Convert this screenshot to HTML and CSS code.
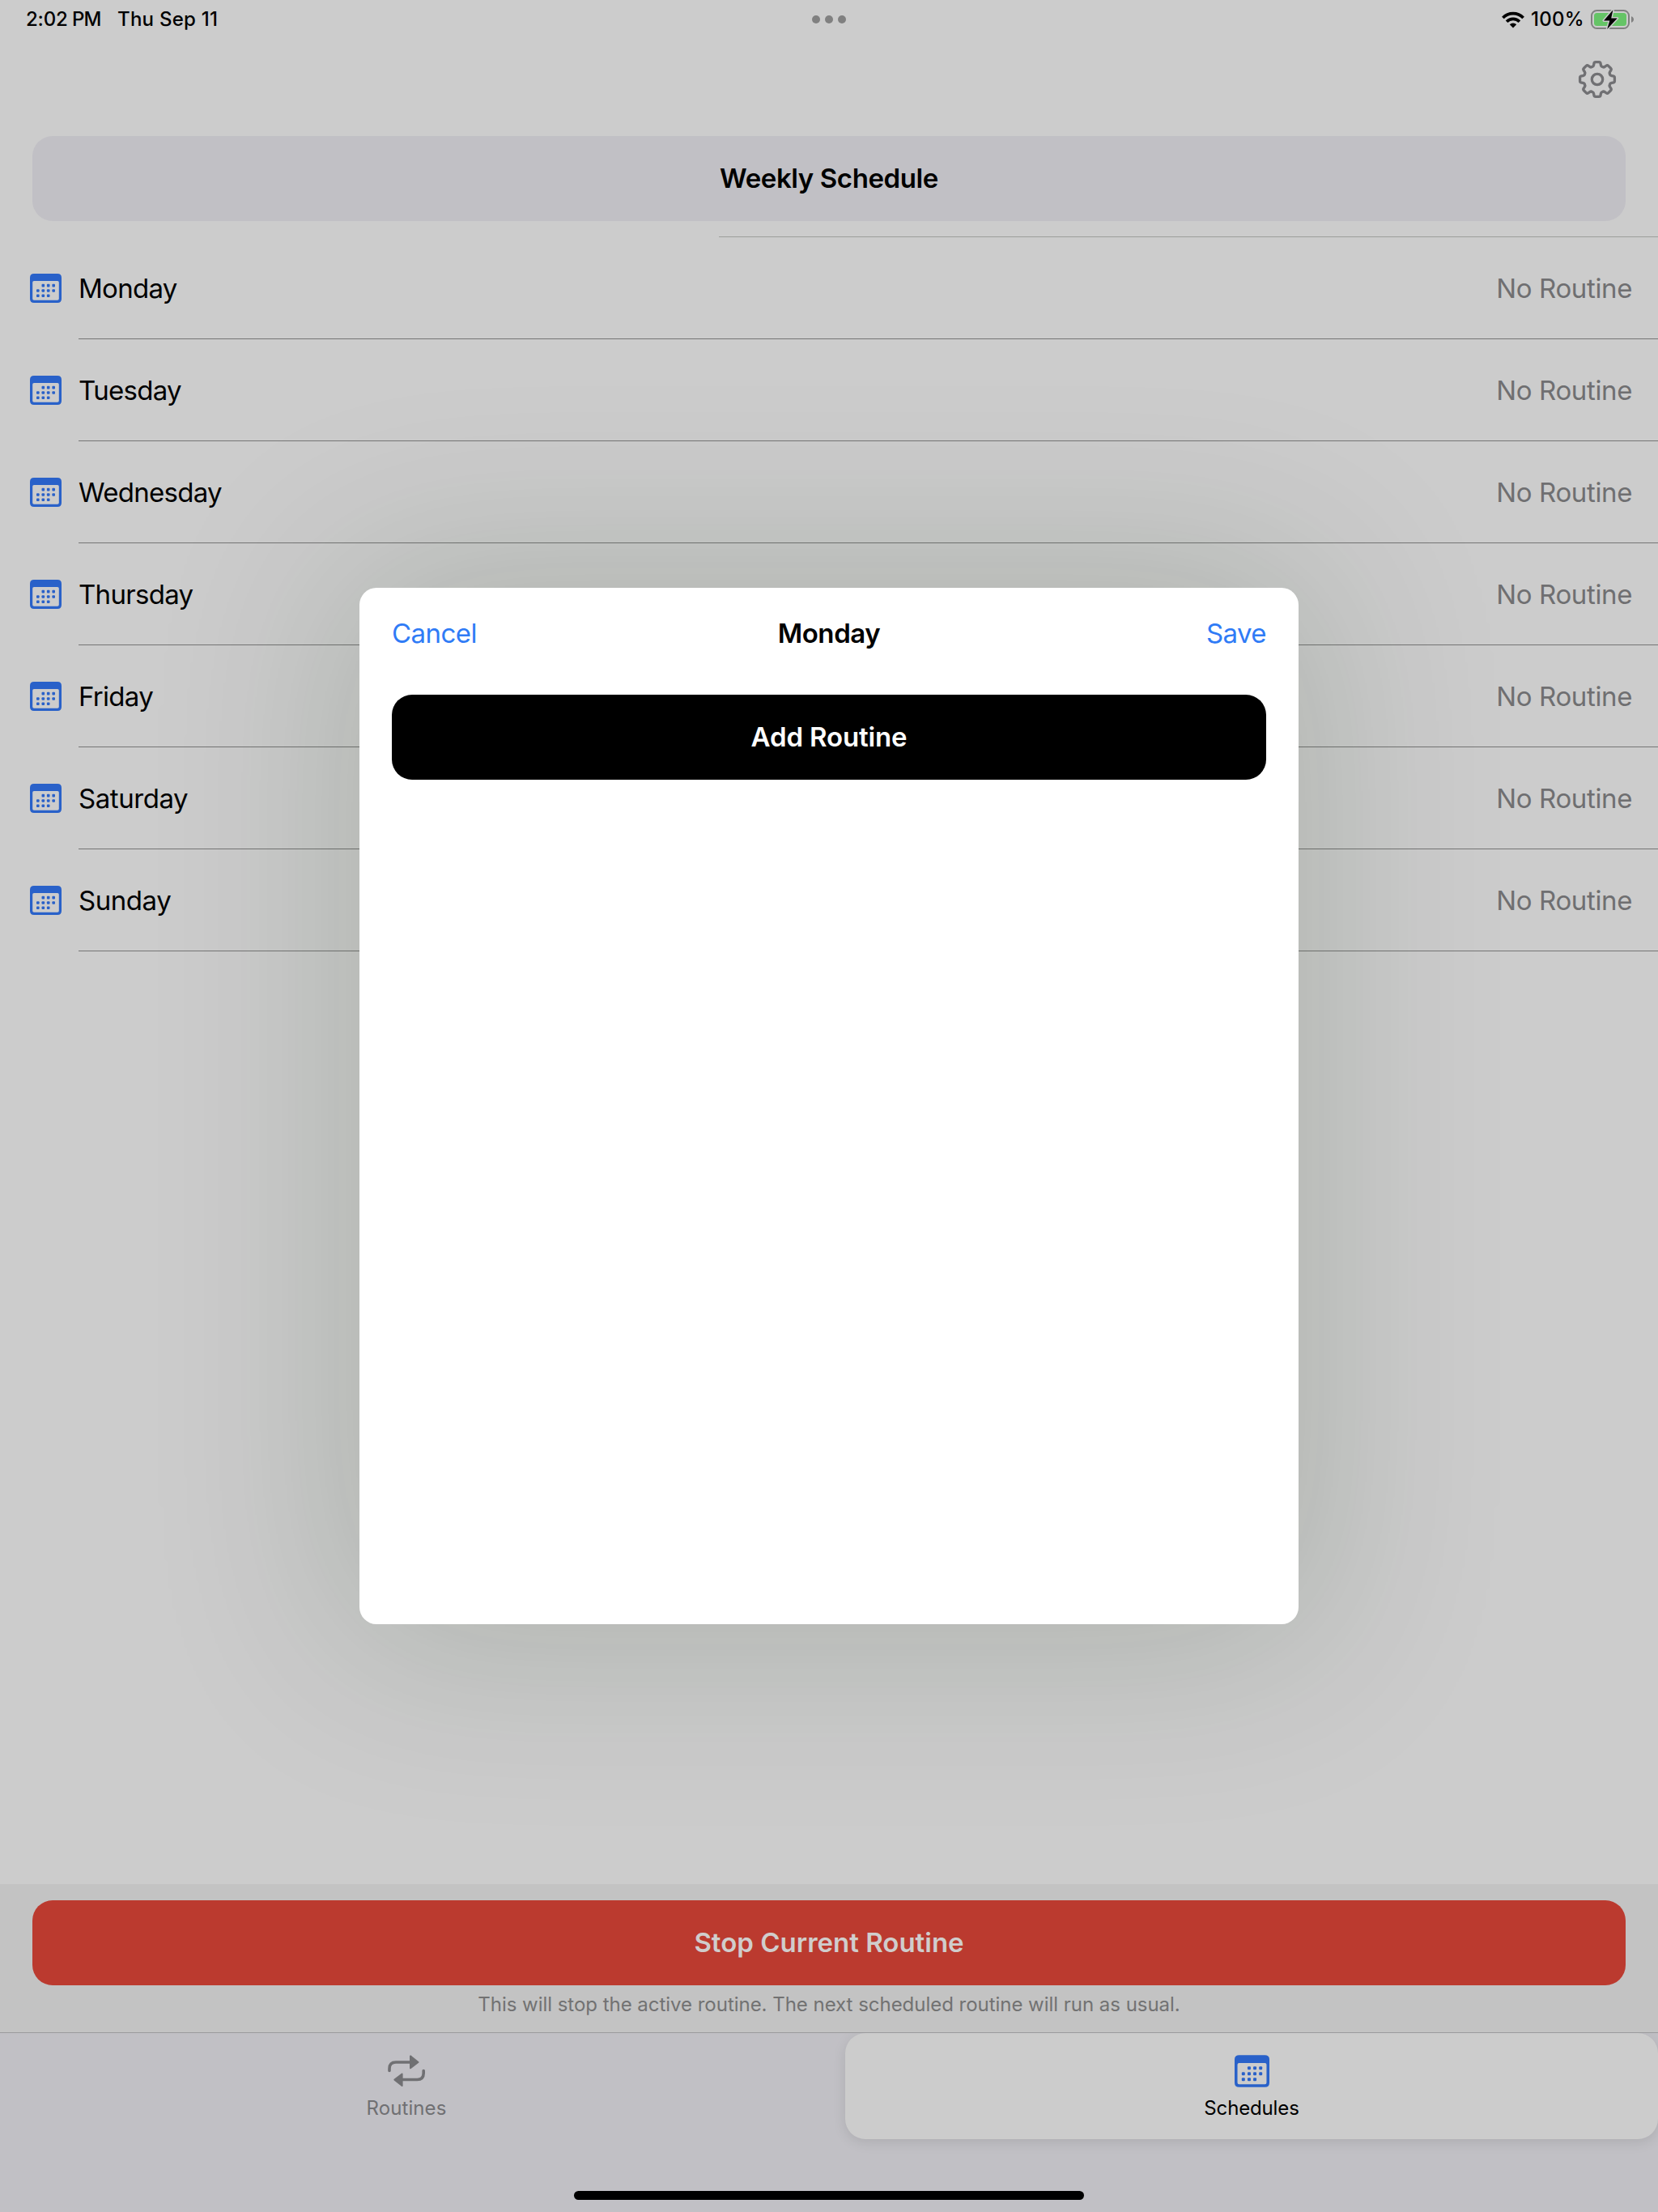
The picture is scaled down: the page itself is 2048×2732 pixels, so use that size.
FILE: index.html
```
<!DOCTYPE html>
<html lang="en">
<head>
<meta charset="utf-8">
<title>Weekly Schedule</title>
<link rel="stylesheet" href="styles.css">
</head>
<body>
<svg class="defs" aria-hidden="true">
  <symbol id="calendar" viewBox="0 0 39 36">
    <path fill="currentColor" fill-rule="evenodd" d="M5 0H34Q39 0 39 5V31Q39 36 34 36H5Q0 36 0 31V5Q0 0 5 0ZM5 9Q3.2 9 3.2 10.8V31Q3.2 32.8 5 32.8H34Q35.8 32.8 35.8 31V10.8Q35.8 9 34 9Z"/>
    <g fill="currentColor">
      <rect x="14.5" y="12.8" width="3.6" height="3.6" rx="1"/><rect x="20.9" y="12.8" width="3.6" height="3.6" rx="1"/><rect x="27.4" y="12.8" width="3.6" height="3.6" rx="1"/>
      <rect x="8" y="19.2" width="3.6" height="3.6" rx="1"/><rect x="14.5" y="19.2" width="3.6" height="3.6" rx="1"/><rect x="20.9" y="19.2" width="3.6" height="3.6" rx="1"/><rect x="27.4" y="19.2" width="3.6" height="3.6" rx="1"/>
      <rect x="8" y="25.5" width="3.6" height="3.6" rx="1"/><rect x="14.5" y="25.5" width="3.6" height="3.6" rx="1"/><rect x="20.9" y="25.5" width="3.6" height="3.6" rx="1"/>
    </g>
  </symbol>
</svg>

<div class="app">
  <header class="status">
    <div class="status-left"><span class="time">2:02</span><span class="ampm">PM</span><span class="date">Thu Sep 11</span></div>
    <div class="dots"><i></i><i></i><i></i></div>
    <div class="status-right">
      <svg class="wifi" width="28" height="21" viewBox="0 0 28 21">
        <g fill="none" stroke="#000" stroke-width="3.7"><path d="M1.4 8A17.6 17.6 0 0 1 26.6 8"/><path d="M6.1 12.7A11 11 0 0 1 21.9 12.7"/></g>
        <path d="M14 20.4L9.8 16.2A5.9 5.9 0 0 1 18.2 16.2Z"/>
      </svg>
      <span class="percent">100%</span>
      <svg class="battery" width="54" height="26" viewBox="0 0 54 26">
        <rect x="1" y="2" width="46" height="22" rx="6.5" fill="none" stroke="#808080" stroke-width="2"/>
        <rect x="4" y="5" width="40" height="16" rx="3.5" fill="#65c466"/>
        <path d="M50 9.2Q53 10.2 53 13T50 16.8Z" fill="#808080"/>
        <path d="M27.4 1.2L16 14.4H23.3L20.2 25L32.8 11.5H25.2Z" fill="#000" stroke="#ccc" stroke-width="3" paint-order="stroke" stroke-linejoin="round"/>
      </svg>
    </div>
  </header>

  <div class="toolbar">
    <svg width="48" height="48" viewBox="-24 -24 48 48" fill="none" stroke="#707073" stroke-width="3.3" stroke-linecap="round" stroke-linejoin="round">
      <circle r="6.7"/>
      <g id="gear-tooth"><path d="M-6.4 -15.5Q-4.7 -15.8 -4.4 -17.6L-4.1 -19.6Q-3.8 -21.4 -2 -21.4H2Q3.8 -21.4 4.1 -19.6L4.4 -17.6Q4.7 -15.8 6.4 -15.5"/></g>
      <use href="#gear-tooth" transform="rotate(45)"/><use href="#gear-tooth" transform="rotate(90)"/><use href="#gear-tooth" transform="rotate(135)"/><use href="#gear-tooth" transform="rotate(180)"/><use href="#gear-tooth" transform="rotate(225)"/><use href="#gear-tooth" transform="rotate(270)"/><use href="#gear-tooth" transform="rotate(315)"/>
    </svg>
  </div>

  <main>
    <h1 class="title">Weekly Schedule</h1>
    <div class="rule"></div>
    <ul class="days">
      <li><svg class="cal"><use href="#calendar"/></svg><div class="day"><span>Monday</span><span class="none">No Routine</span></div></li>
      <li><svg class="cal"><use href="#calendar"/></svg><div class="day"><span>Tuesday</span><span class="none">No Routine</span></div></li>
      <li><svg class="cal"><use href="#calendar"/></svg><div class="day"><span>Wednesday</span><span class="none">No Routine</span></div></li>
      <li><svg class="cal"><use href="#calendar"/></svg><div class="day"><span>Thursday</span><span class="none">No Routine</span></div></li>
      <li><svg class="cal"><use href="#calendar"/></svg><div class="day"><span>Friday</span><span class="none">No Routine</span></div></li>
      <li><svg class="cal"><use href="#calendar"/></svg><div class="day"><span class="wide">Saturday</span><span class="none">No Routine</span></div></li>
      <li><svg class="cal"><use href="#calendar"/></svg><div class="day"><span class="wide">Sunday</span><span class="none">No Routine</span></div></li>
    </ul>
  </main>

  <section class="stop">
    <button class="stop-button">Stop Current Routine</button>
    <p>This will stop the active routine. The next scheduled routine will run as usual.</p>
  </section>

  <nav class="tabs">
    <div class="tab-row">
      <a class="tab tab-routines">
        <svg width="46" height="40" viewBox="0 0 46 40" fill="none" stroke="currentColor" stroke-width="3.6" stroke-linecap="round">
          <path d="M2 19.5V17Q2 9 10 9H27M44.2 19.5V22.5Q44.2 30.5 36.2 30.5H18"/>
          <path d="M28 1.4L37.5 9L28 16.3ZM17.6 23.6L8.4 30.6L17.6 38Z" fill="currentColor" stroke-width="2" stroke-linejoin="round"/>
        </svg>
        <span>Routines</span>
      </a>
      <a class="tab tab-schedules">
        <svg class="cal-tab"><use href="#calendar"/></svg>
        <span>Schedules</span>
      </a>
    </div>
    <div class="home"></div>
  </nav>
</div>

<div class="overlay">
  <div class="dialog">
    <div class="dialog-bar">
      <span class="cancel">Cancel</span>
      <h2>Monday</h2>
      <span class="save">Save</span>
    </div>
    <button class="add">Add Routine</button>
  </div>
</div>
</body>
</html>
```

FILE: styles.css
```
* { box-sizing: border-box; margin: 0; padding: 0; }
body {
  width: 2048px;
  height: 2732px;
  overflow: hidden;
  background: #ccc;
  color: #000;
  font: 400 33px/40px Inter, "Liberation Sans", sans-serif;
}
svg { display: block; flex: none; }
button { border: 0; font: inherit; color: inherit; }
.defs { display: none; }

.app { display: flex; flex-direction: column; height: 2732px; }

/* status bar */
.status {
  display: grid;
  grid-template-columns: 1fr auto 1fr;
  align-items: center;
  height: 48px;
  padding: 0 29px 0 32px;
  font-size: 24px;
  font-weight: 500;
  line-height: 30px;
}
.status-left { display: flex; margin-top: -1px; }
.time { width: 57px; letter-spacing: -.2px; }
.ampm { width: 56px; letter-spacing: -.8px; }
.date { letter-spacing: .25px; }
.dots { display: flex; gap: 6px; margin-right: 3px; }
.dots i { width: 10px; height: 10px; border-radius: 50%; background: #808080; }
.status-right { display: flex; justify-content: flex-end; align-items: center; }
.percent { width: 74px; margin: -1px 0 0 8px; letter-spacing: .3px; }

.toolbar {
  display: flex;
  justify-content: flex-end;
  height: 120px;
  padding: 26px 51px 0 0;
}

/* schedule */
main { flex: 1; }
.title {
  height: 105px;
  margin: 0 40px;
  border-radius: 25px;
  background: #c1c0c5;
  font-size: 33px;
  font-weight: 600;
  line-height: 105px;
  letter-spacing: -.4px;
  text-align: center;
}
.rule { height: 1px; margin: 19px 0 0 888px; background: #9c9e9b; }
.days { list-style: none; }
.days li { display: flex; align-items: center; height: 126px; padding-left: 37px; }
.cal { width: 39px; height: 36px; margin: 0 21px 0 0; color: #2961c9; }
.day {
  display: flex;
  flex: 1;
  align-items: center;
  justify-content: space-between;
  height: 126px;
  padding-right: 32px;
  border-bottom: 1px solid #757575;
  letter-spacing: -.7px;
}
.wide { letter-spacing: -.45px; }
.none { color: #6f6f71; letter-spacing: -.38px; }

/* stop panel */
.stop {
  height: 183px;
  padding: 20px 40px 0;
  background: #c3c3c3;
  text-align: center;
}
.stop-button {
  display: block;
  width: 100%;
  height: 105px;
  padding-bottom: 2px;
  border-radius: 25px;
  background: #bb3a2f;
  color: #d0cdcc;
  font-weight: 600;
}
.stop p {
  margin-top: 9px;
  color: #727272;
  font-size: 24px;
  line-height: 30px;
  letter-spacing: -.03px;
}

/* tab bar */
.tabs {
  display: flex;
  flex-direction: column;
  align-items: center;
  justify-content: space-between;
  height: 222px;
  padding-bottom: 15px;
  border-top: 1px solid #9b9b9d;
  background: #c1c0c5;
  overflow: hidden;
}
.tab-row { display: grid; grid-template-columns: 1fr 1fr; gap: 40px; width: 100%; height: 131px; }
.tab {
  display: flex;
  flex-direction: column;
  align-items: center;
  gap: 11px;
  padding-top: 27px;
  border-radius: 25px;
  font-size: 24px;
  line-height: 30px;
}
.tab-routines { color: #707073; letter-spacing: .1px; }
.tab-schedules {
  background: #ccc;
  box-shadow: 0 4px 16px rgba(0, 0, 0, .1);
  letter-spacing: -.15px;
}
.cal-tab { width: 43px; height: 40px; color: #2961c9; }
.home { width: 630px; height: 11px; border-radius: 6px; background: #000; }

/* dialog */
.overlay {
  position: absolute;
  top: 0;
  left: 0;
  display: grid;
  place-items: center;
  width: 2048px;
  height: 2732px;
  overflow: hidden;
}
.dialog {
  width: 1160px;
  height: 1280px;
  padding: 0 40px;
  border-radius: 21px;
  background: #fff;
  box-shadow: 0 0 240px 24px rgba(15, 37, 0, .155);
}
.dialog-bar {
  display: grid;
  grid-template-columns: 1fr auto 1fr;
  align-items: center;
  height: 112px;
  margin-bottom: 20px;
}
.dialog-bar h2 { font-size: 33px; font-weight: 600; letter-spacing: -.4px; }
.cancel, .save { color: #2f7bf6; letter-spacing: -.56px; }
.save { text-align: right; }
.add {
  display: block;
  width: 100%;
  height: 105px;
  padding-bottom: 2px;
  border-radius: 25px;
  background: #000;
  color: #fff;
  font-weight: 600;
  letter-spacing: -.15px;
}
```
